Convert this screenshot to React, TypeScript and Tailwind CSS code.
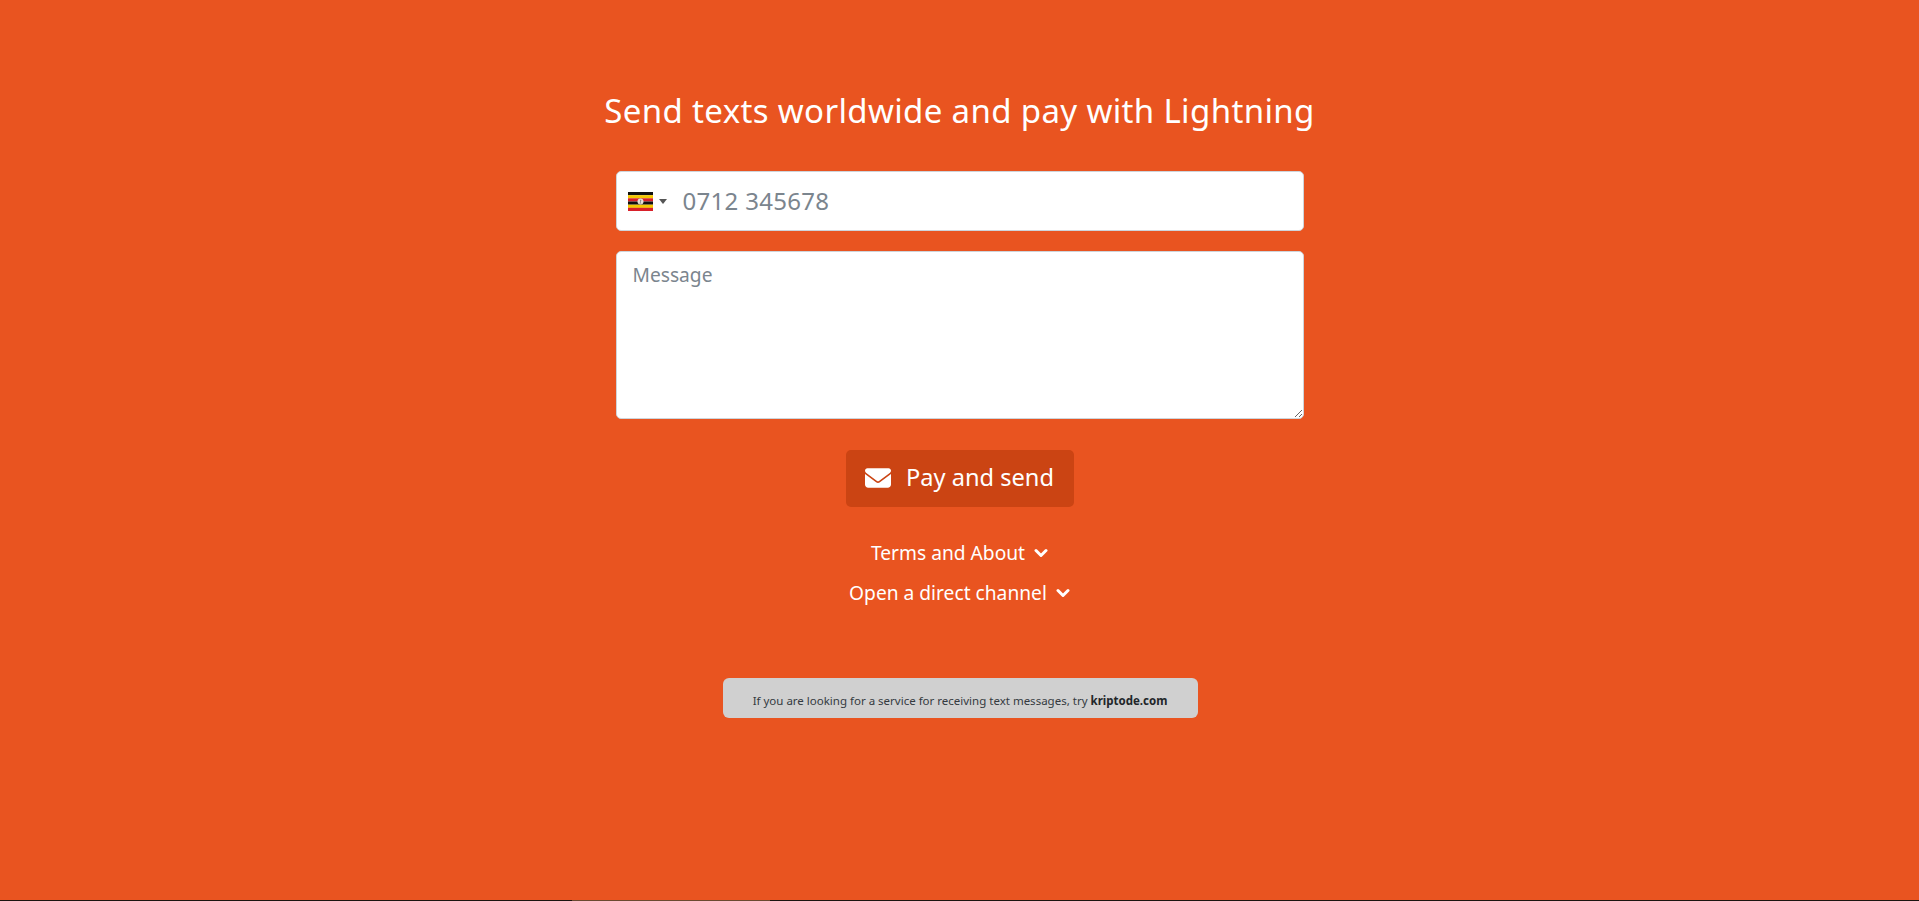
import { useState } from "react";

function UgandaFlag() {
  return (
    <svg width="25" height="19" viewBox="0 0 25 19" className="block">
      <rect y="0" width="25" height="3.2" fill="#111" />
      <rect y="3.2" width="25" height="3.2" fill="#f5c800" />
      <rect y="6.3" width="25" height="3.2" fill="#d8202a" />
      <rect y="9.5" width="25" height="3.2" fill="#111" />
      <rect y="12.7" width="25" height="3.2" fill="#f5c800" />
      <rect y="15.8" width="25" height="3.2" fill="#d8202a" />
      <circle cx="12.5" cy="9.5" r="3" fill="#e6e0d8" />
      <path d="M12 7.500 L13.500 8.500 L12.500 10 L13.500 11.500 L11.500 11.500 L12 10 Z" fill="#888" />
    </svg>
  );
}

function EnvelopeIcon() {
  return (
    <svg width="26" height="20" viewBox="0 0 512 384" fill="#fff" className="block">
      <path d="M48 0C21.500 0 0 21.500 0 48c0 15.100 7.100 29.300 19.200 38.400l217.600 163.200c11.400 8.500 27 8.500 38.400 0L492.800 86.400C504.900 77.300 512 63.100 512 48c0-26.500-21.500-48-48-48H48zM0 112v208c0 35.300 28.700 64 64 64h384c35.300 0 64-28.700 64-64V112L294.400 275.200c-22.800 17.100-54 17.100-76.800 0L0 112z" />
    </svg>
  );
}

function Chevron() {
  return (
    <svg width="14" height="10" viewBox="0 0 14 10" className="block">
      <path d="M2 2.500 L7 7.500 L12 2.500" fill="none" stroke="#fff" strokeWidth="3" strokeLinecap="round" strokeLinejoin="round" />
    </svg>
  );
}

export default function App() {
  const [phone, setPhone] = useState("");
  const [message, setMessage] = useState("");

  return (
    <div className="relative h-[901px] overflow-hidden bg-[#e95420] font-['Noto_Sans',sans-serif] text-white flex flex-col items-center">
      <h1 className="mt-[89px] h-[44px] text-[33px] leading-[44px] tracking-[0.35px] whitespace-nowrap">
        Send texts worldwide and pay with Lightning
      </h1>

      {/* Phone */}
      <div className="mt-[38px] flex h-[60px] w-[688px] items-center rounded-[5px] bg-white border border-[#ced4da]">
        <div className="ml-[11px] flex items-center">
          <UgandaFlag />
          <span className="ml-[6px] h-0 w-0 border-x-[4px] border-t-[5px] border-x-transparent border-t-[#555]" />
        </div>
        <input
          value={phone}
          onChange={(e) => setPhone(e.target.value)}
          placeholder="0712 345678"
          className="ml-[16px] flex-1 bg-transparent text-[24px] tracking-[0.3px] text-[#212529] outline-none placeholder:text-[#7b858e]"
        />
      </div>

      {/* Message */}
      <textarea
        value={message}
        onChange={(e) => setMessage(e.target.value)}
        placeholder="Message"
        className="mt-[20px] block h-[168px] w-[688px] rounded-[5px] border border-[#ced4da] bg-white px-[16px] py-[8px] text-[19.2px] leading-[30px] text-[#212529] outline-none placeholder:text-[#7b858e]"
      />

      <button
        type="button"
        className="mt-[31px] flex h-[57px] w-[228px] items-center justify-center gap-[15px] rounded-[5px] bg-[#cb4413] pb-[2px] text-[23.6px]"
      >
        <EnvelopeIcon />
        <span>Pay and send</span>
      </button>

      <div className="mt-[26px] flex h-[40px] items-center gap-[9px] text-[19.2px]">
        <span>Terms and About</span>
        <Chevron />
      </div>
      <div className="flex h-[40px] items-center gap-[9px] text-[19.2px]">
        <span>Open a direct channel</span>
        <Chevron />
      </div>

      <div className="mt-[65px] ml-[1px] flex h-[40px] w-[475px] items-center justify-center rounded-[6px] bg-[#d0d0d0] pt-[5px] text-[11.5px] text-[#343a40]">
        <span>
          If you are looking for a service for receiving text messages, try{" "}
          <b className="text-[#212529]">kriptode.com</b>
        </span>
      </div>

      {/* strip along the bottom edge */}
      <div className="absolute bottom-0 left-0 right-0 h-px bg-[#1c1410]">
        <div className="absolute left-[572px] top-0 h-px w-[198px] bg-[#6b4a30]" />
      </div>
    </div>
  );
}
